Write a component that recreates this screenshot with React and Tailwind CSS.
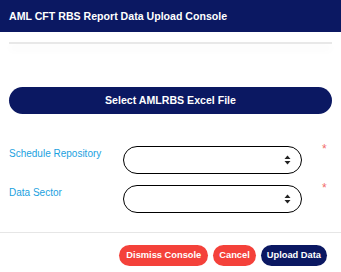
import React from 'react';

const SortIcon = () => (
  <svg width="7" height="10" viewBox="0 0 7 10" fill="#222">
    <path d="M3.5 0.5 L6.5 4 L0.5 4 Z" />
    <path d="M3.5 9.5 L6.5 6 L0.5 6 Z" />
  </svg>
);

const SelectRow = ({ label }) => (
  <div className="grid grid-cols-[114px_179px_1fr] items-start">
    <label className="pt-[2px] text-[10px] leading-[12px] text-[#1aa1e0]">{label}</label>
    <div className="h-[28px] rounded-full border border-black bg-white flex items-center justify-end pr-[10px]">
      <SortIcon />
    </div>
    <span className="pl-[20px] -mt-[3px] text-[12px] leading-[12px] text-[#f26b6b]">*</span>
  </div>
);

const App = () => {
  return (
    <div className="w-[341px] h-[272px] bg-white font-['Liberation_Sans',Arial,sans-serif] overflow-hidden">
      <div className="h-[32px] bg-[#0b1862] px-[9px] flex items-center">
        <h1 className="text-white font-bold text-[10.6px] leading-none">AML CFT RBS Report Data Upload Console</h1>
      </div>

      <div className="px-[9px] pt-[10px]">
        <div className="h-[2px] bg-[#e8e8e8] shadow-[0_5px_8px_rgba(0,0,0,0.06)]"></div>

        <button className="mt-[43px] w-full h-[27px] rounded-full bg-[#0b1862] text-white font-bold text-[10.6px]">
          Select AMLRBS Excel File
        </button>

        <div className="mt-[32px] flex flex-col gap-[11px]">
          <SelectRow label="Schedule Repository" />
          <SelectRow label="Data Sector" />
        </div>
      </div>

      <div className="mt-[19px] border-t border-[#e6e6e6] pt-[12px] pr-[14px] flex justify-end gap-[5px]">
        <button className="h-[21px] px-[7px] rounded-full bg-[#f4413a] text-white font-bold text-[9.3px]">Dismiss Console</button>
        <button className="h-[21px] px-[6px] rounded-full bg-[#f4413a] text-white font-bold text-[9.3px]">Cancel</button>
        <button className="h-[21px] px-[6px] rounded-full bg-[#0b1862] text-white font-bold text-[9.3px]">Upload Data</button>
      </div>
    </div>
  );
};

export default App;
